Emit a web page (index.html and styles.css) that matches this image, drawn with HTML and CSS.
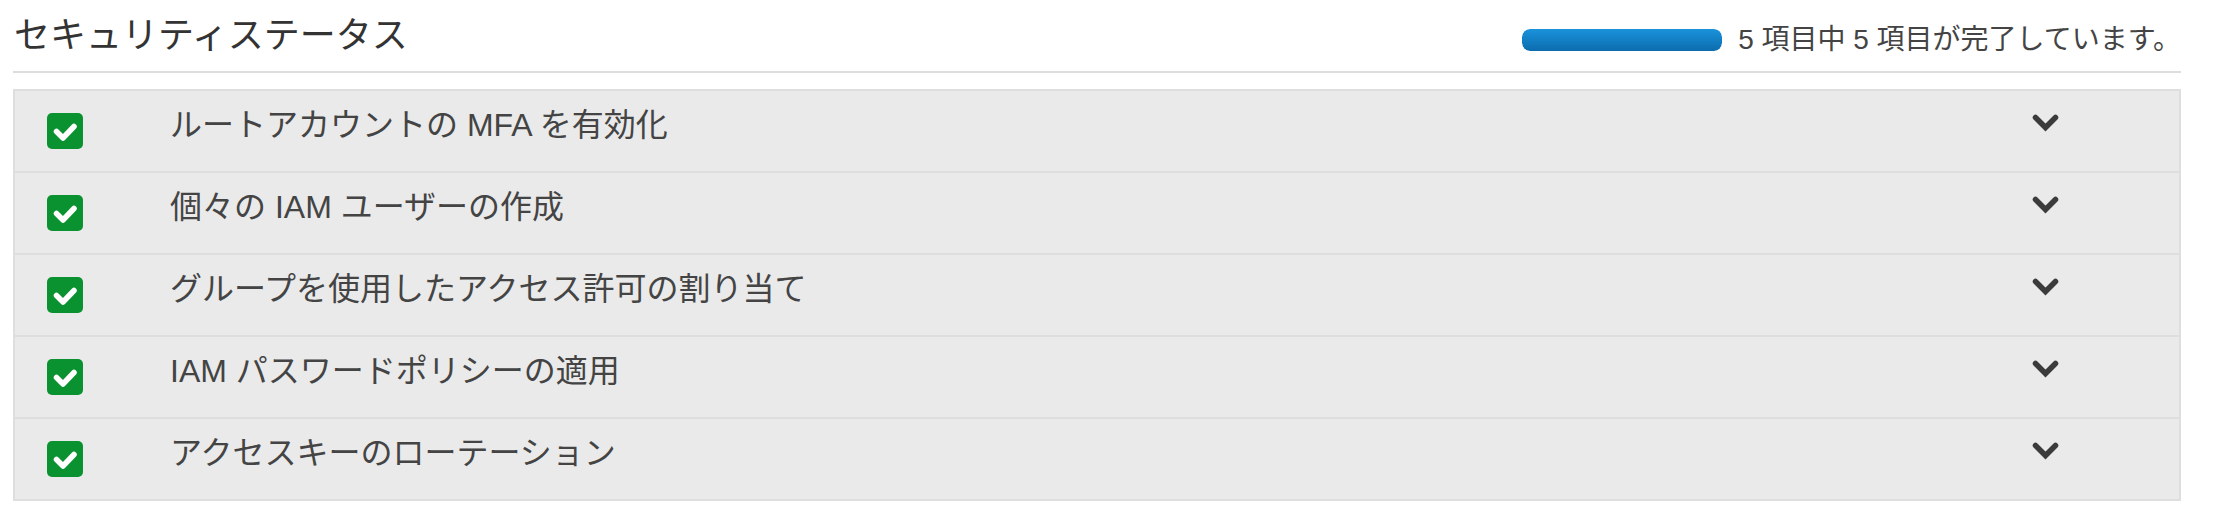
FILE: index.html
```html
<!DOCTYPE html>
<html lang="ja">
<head>
    <meta charset="UTF-8">
    <meta name="viewport" content="width=device-width, initial-scale=1.0">
    <title>セキュリティステータス</title>
    <link rel="stylesheet" href="styles.css">
</head>
<body>
    <div class="container">
        <header class="status-header">
            <h2>セキュリティステータス</h2>
            <div class="progress">
                <div class="progress-bar"><div class="progress-fill" style="width: 100%"></div></div>
                <span class="progress-text">5 項目中 5 項目が完了しています。</span>
            </div>
        </header>

        <ul class="checklist">
            <li class="item">
                <span class="check"><svg viewBox="0 0 36 36"><polyline points="9.5,18.5 16,25 27,13.5"></polyline></svg></span>
                <span class="label">ルートアカウントの MFA を有効化</span>
                <span class="chevron"><svg viewBox="0 0 27 18"><polyline points="3.5,3.5 13.5,13.5 23.5,3.5"></polyline></svg></span>
            </li>
            <li class="item">
                <span class="check"><svg viewBox="0 0 36 36"><polyline points="9.5,18.5 16,25 27,13.5"></polyline></svg></span>
                <span class="label">個々の IAM ユーザーの作成</span>
                <span class="chevron"><svg viewBox="0 0 27 18"><polyline points="3.5,3.5 13.5,13.5 23.5,3.5"></polyline></svg></span>
            </li>
            <li class="item">
                <span class="check"><svg viewBox="0 0 36 36"><polyline points="9.5,18.5 16,25 27,13.5"></polyline></svg></span>
                <span class="label">グループを使用したアクセス許可の割り当て</span>
                <span class="chevron"><svg viewBox="0 0 27 18"><polyline points="3.5,3.5 13.5,13.5 23.5,3.5"></polyline></svg></span>
            </li>
            <li class="item">
                <span class="check"><svg viewBox="0 0 36 36"><polyline points="9.5,18.5 16,25 27,13.5"></polyline></svg></span>
                <span class="label">IAM パスワードポリシーの適用</span>
                <span class="chevron"><svg viewBox="0 0 27 18"><polyline points="3.5,3.5 13.5,13.5 23.5,3.5"></polyline></svg></span>
            </li>
            <li class="item">
                <span class="check"><svg viewBox="0 0 36 36"><polyline points="9.5,18.5 16,25 27,13.5"></polyline></svg></span>
                <span class="label">アクセスキーのローテーション</span>
                <span class="chevron"><svg viewBox="0 0 27 18"><polyline points="3.5,3.5 13.5,13.5 23.5,3.5"></polyline></svg></span>
            </li>
        </ul>
    </div>
</body>
</html>
```

FILE: styles.css
```css
/* styles.css */
body {
    font-family: 'Liberation Sans', 'Noto Sans CJK JP', sans-serif;
    margin: 0;
    background: #fff;
    color: #444;
}

.container {
    padding: 0 33px 0 13px;
}

.status-header {
    display: flex;
    justify-content: space-between;
    align-items: center;
    height: 71px;
    border-bottom: 2px solid #dddddd;
}

.status-header h2 {
    margin: 0 0 0 1px;
    font-size: 36px;
    font-weight: 400;
    color: #333;
    line-height: 1;
}

.progress {
    display: flex;
    align-items: center;
    gap: 16px;
    margin-top: 8px;
}

.progress-bar {
    width: 200px;
    height: 22px;
    border-radius: 8px;
    overflow: hidden;
}

.progress-fill {
    height: 100%;
    background: linear-gradient(#1a92db, #0c6cad); /* blue bar */
    border-radius: 8px;
}

.progress-text {
    font-size: 28px;
    color: #444;
    line-height: 1;
}

.checklist {
    list-style: none;
    margin: 16px 0 0;
    padding: 0;
    background: #eaeaea;
    border: 2px solid #dedede;
}

.item {
    display: flex;
    align-items: center;
    height: 80px;
    border-bottom: 2px solid #dedede;
}

.item:last-child {
    border-bottom: none;
}

.check {
    width: 36px;
    height: 36px;
    margin-left: 32px;
    margin-right: 87px;
    background: #0a9230;
    border-radius: 5px;
    flex-shrink: 0;
}

.check svg {
    width: 36px;
    height: 36px;
    display: block;
}

.check polyline {
    fill: none;
    stroke: #fff;
    stroke-width: 5.5;
    stroke-linecap: round;
    stroke-linejoin: round;
}

.label {
    flex: 1;
    font-size: 32px;
    color: #444;
    line-height: 1;
    margin-top: -12px;
}

.chevron {
    width: 27px;
    height: 18px;
    margin-right: 120px;
    margin-top: -16px;
}

.chevron svg {
    width: 27px;
    height: 18px;
    display: block;
}

.chevron polyline {
    fill: none;
    stroke: #3b3b3b;
    stroke-width: 5.5;
    stroke-linecap: round;
    stroke-linejoin: miter;
}
```
